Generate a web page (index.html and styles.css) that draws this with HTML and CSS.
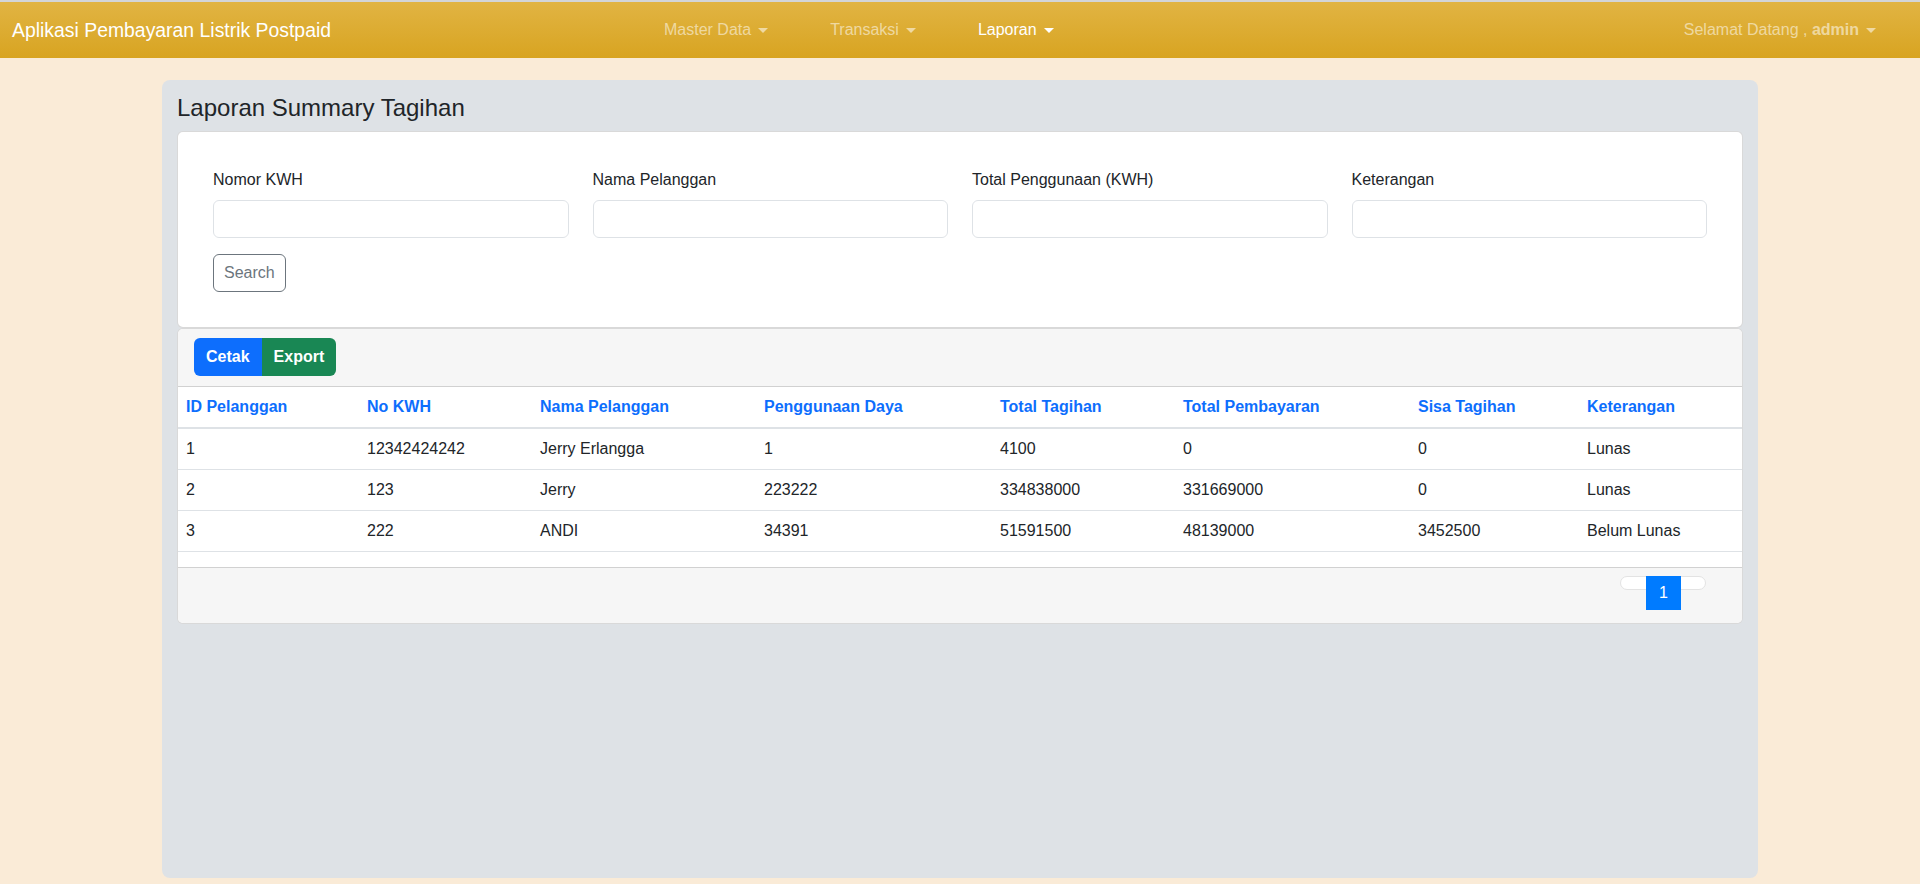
FILE: index.html
```html
<!DOCTYPE html>
<html lang="id">
<head>
<meta charset="utf-8">
<title>Aplikasi Pembayaran Listrik Postpaid</title>
<link rel="stylesheet" href="styles.css">
</head>
<body>
<nav class="navbar">
  <a class="brand" href="#">Aplikasi Pembayaran Listrik Postpaid</a>
  <ul class="nav">
    <li><a class="nav-link dropdown" href="#">Master Data</a></li>
    <li><a class="nav-link dropdown" href="#">Transaksi</a></li>
    <li><a class="nav-link dropdown active" href="#">Laporan</a></li>
  </ul>
  <a class="nav-link dropdown user" href="#">Selamat Datang , <b>admin</b></a>
</nav>

<main class="page">
  <section class="panel">
    <h4 class="title">Laporan Summary Tagihan</h4>

    <div class="card filter">
      <div class="filter-row">
        <div class="field">
          <label class="form-label">Nomor KWH</label>
          <input class="form-control" type="text">
        </div>
        <div class="field">
          <label class="form-label">Nama Pelanggan</label>
          <input class="form-control" type="text">
        </div>
        <div class="field">
          <label class="form-label">Total Penggunaan (KWH)</label>
          <input class="form-control" type="text">
        </div>
        <div class="field">
          <label class="form-label">Keterangan</label>
          <input class="form-control" type="text">
        </div>
      </div>
      <div class="actions">
        <button class="btn btn-outline">Search</button>
      </div>
    </div>

    <div class="card result">
      <div class="card-header">
        <div class="btn-group">
          <button class="btn btn-primary">Cetak</button>
          <button class="btn btn-success">Export</button>
        </div>
      </div>
      <table class="table">
        <colgroup>
          <col class="c1"><col class="c2"><col class="c3"><col class="c4">
          <col class="c5"><col class="c6"><col class="c7"><col class="c8">
        </colgroup>
        <thead>
          <tr>
            <th>ID Pelanggan</th>
            <th>No KWH</th>
            <th>Nama Pelanggan</th>
            <th>Penggunaan Daya</th>
            <th>Total Tagihan</th>
            <th>Total Pembayaran</th>
            <th>Sisa Tagihan</th>
            <th>Keterangan</th>
          </tr>
        </thead>
        <tbody>
          <tr>
            <td>1</td><td>12342424242</td><td>Jerry Erlangga</td><td>1</td>
            <td>4100</td><td>0</td><td>0</td><td>Lunas</td>
          </tr>
          <tr>
            <td>2</td><td>123</td><td>Jerry</td><td>223222</td>
            <td>334838000</td><td>331669000</td><td>0</td><td>Lunas</td>
          </tr>
          <tr>
            <td>3</td><td>222</td><td>ANDI</td><td>34391</td>
            <td>51591500</td><td>48139000</td><td>3452500</td><td>Belum Lunas</td>
          </tr>
        </tbody>
      </table>
      <div class="card-footer">
        <ul class="pagination">
          <li class="page-item"><a class="page-link" href="#">1</a></li>
        </ul>
      </div>
    </div>
  </section>
</main>
</body>
</html>
```

FILE: styles.css
```css
* { box-sizing: border-box; }

html, body {
  margin: 0;
  padding: 0;
}

body {
  background: #faebd7;
  font-family: "Liberation Sans", Arial, sans-serif;
  font-size: 16px;
  line-height: 1.5;
  color: #212529;
  border-top: 2px solid #d3d5d8;
}

a { text-decoration: none; }

/* ---------- navbar ---------- */
.navbar {
  height: 56px;
  display: flex;
  align-items: center;
  padding: 0 12px;
  background: linear-gradient(#e1b443, #d8a421);
}

.brand {
  flex: 0 0 621px;
  color: #fff;
  font-size: 19.4px;
  line-height: 30px;
}

.nav {
  list-style: none;
  margin: 0;
  padding: 0;
  display: flex;
}

.nav-link {
  display: inline-flex;
  align-items: center;
  padding: 8px 31px;
  color: rgba(255, 255, 255, 0.55);
  font-size: 16px;
}

.nav-link.active { color: #fff; }

.dropdown::after {
  content: "";
  display: inline-block;
  margin-left: 7px;
  border-top: 5px solid currentColor;
  border-left: 5px solid transparent;
  border-right: 5px solid transparent;
}

.nav-link.user {
  margin-left: auto;
  padding: 8px 32px 8px 8px;
  white-space: pre;
}

.nav-link.user b { font-weight: 700; }

/* ---------- page ---------- */
.page {
  padding: 22px 0 6px;
}

.panel {
  width: 1596px;
  min-height: 798px;
  margin: 0 auto;
  padding: 14px 15px 20px;
  background: #dee2e6;
  border-radius: 8px;
}

.title {
  margin: 0 0 8px;
  font-size: 24px;
  font-weight: 500;
  line-height: 1.2;
  color: #212529;
}

.card {
  background: #fff;
  border: 1px solid rgba(0, 0, 0, 0.15);
  border-radius: 6px;
  overflow: hidden;
}

/* ---------- filter ---------- */
.filter {
  padding: 36px 23px 35px;
}

.filter-row {
  display: grid;
  grid-template-columns: repeat(4, 1fr);
}

.field {
  display: flex;
  flex-direction: column;
  padding: 0 12px;
}

.form-label {
  margin-bottom: 8px;
  line-height: 24px;
}

.form-control {
  height: 38px;
  border: 1px solid #dee2e6;
  border-radius: 6px;
  padding: 6px 12px;
  font: inherit;
  background: #fff;
}

.actions {
  padding: 16px 12px 0;
}

.btn {
  font-family: inherit;
  font-size: 16px;
  line-height: 24px;
  padding: 6px 12px;
  border-radius: 6px;
  cursor: pointer;
}

.btn-outline {
  background: transparent;
  border: 1px solid #6c757d;
  color: #6c757d;
  padding: 6px 10px;
}

/* ---------- result ---------- */
.result {
  border-radius: 6px;
}

.card-header {
  background: #f6f6f6;
  padding: 9px 16px 10px;
  border-bottom: 1px solid rgba(0, 0, 0, 0.15);
}

.btn-group {
  display: inline-flex;
}

.btn-group .btn {
  border: 1px solid transparent;
  font-weight: 700;
  color: #fff;
  padding: 6px 11px;
}

.btn-group .btn:first-child { border-radius: 6px 0 0 6px; }
.btn-group .btn:last-child { border-radius: 0 6px 6px 0; }

.btn-primary { background: #0d6efd; border-color: #0d6efd; }
.btn-success { background: #198754; border-color: #198754; }

.table {
  width: 100%;
  border-collapse: collapse;
  table-layout: fixed;
  margin-bottom: 15px;
}

.c1 { width: 181px; }
.c2 { width: 173px; }
.c3 { width: 224px; }
.c4 { width: 236px; }
.c5 { width: 183px; }
.c6 { width: 235px; }
.c7 { width: 169px; }
.c8 { width: auto; }

.table th,
.table td {
  text-align: left;
  padding: 8px;
  line-height: 24px;
  white-space: nowrap;
}

.table th {
  color: #0d6efd;
  font-weight: 700;
  border-bottom: 2px solid #dee2e6;
}

.table td {
  border-bottom: 1px solid #dee2e6;
}

.card-footer {
  background: #f6f6f6;
  border-top: 1px solid rgba(0, 0, 0, 0.15);
  padding: 8px 36px 13px 16px;
  display: flex;
  justify-content: flex-end;
}

.pagination {
  list-style: none;
  margin: 0;
  padding: 0 24px 0 25px;
  height: 14px;
  background: #fff;
  border: 1px solid #e3e3e3;
  border-radius: 7px;
  display: flex;
  align-items: flex-start;
  margin-bottom: 20px;
}

.page-link {
  display: flex;
  align-items: center;
  justify-content: center;
  width: 35px;
  height: 34px;
  margin-top: -1px;
  background: #007bff;
  color: #fff;
  font-size: 16px;
}
```
